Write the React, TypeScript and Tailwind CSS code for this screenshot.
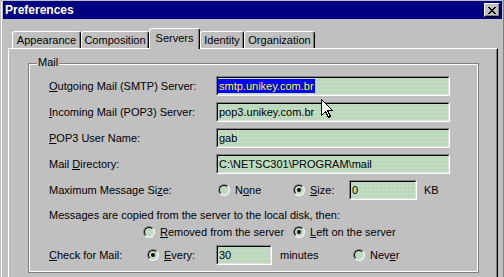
import React from "react";

type FieldProps = {
  width: string;
  value: string;
  selected?: boolean;
};

function Field({ width, value, selected }: FieldProps) {
  return (
    <div
      className={`h-[20px] shrink-0 border border-t-[#808080] border-l-[#808080] border-b-white border-r-white ${width}`}
    >
      <div className="flex h-full items-center border border-t-black border-l-black border-b-[#dfdfdf] border-r-[#dfdfdf] bg-[#c0dcc0] bg-[radial-gradient(circle,#b0cab0_0.6px,transparent_0.8px)] bg-[length:4px_4px] text-[11px] leading-[14px] text-black">
        {selected ? (
          <span className="bg-[#0000ff] pl-[1px] pr-[1px] text-[#ffff00]">{value}</span>
        ) : (
          <span className="pl-[1px]">{value}</span>
        )}
      </div>
    </div>
  );
}

function Radio({ checked }: { checked?: boolean }) {
  return (
    <span className="inline-block h-[12px] w-[12px] shrink-0 rounded-full border border-t-[#808080] border-l-[#808080] border-b-white border-r-white">
      <span className="flex h-full w-full items-center justify-center rounded-full border border-t-black border-l-black border-b-[#dfdfdf] border-r-[#dfdfdf] bg-[#c0dcc0]">
        {checked && <span className="h-[4px] w-[4px] rounded-full bg-black" />}
      </span>
    </span>
  );
}

function Tab({ label, width, active }: { label: string; width: string; active?: boolean }) {
  if (active) {
    return (
      <div
        className={`relative z-10 -mb-[1px] flex h-[21px] items-center justify-center rounded-t-[3px] border-l border-t border-white border-r border-r-black bg-[#c0c0c0] pb-[2px] shadow-[inset_-1px_0_0_#808080] ${width}`}
      >
        {label}
      </div>
    );
  }
  return (
    <div
      className={`flex h-[17px] items-center justify-center rounded-t-[3px] border-l border-t border-white border-r border-r-black shadow-[inset_-1px_0_0_#808080] ${width}`}
    >
      {label}
    </div>
  );
}

function CloseGlyph() {
  return (
    <svg width="8" height="7" viewBox="0 0 8 7" shapeRendering="crispEdges">
      <path
        d="M0 0h2v1H0zM6 0h2v1H6zM1 1h2v1H1zM5 1h2v1H5zM2 2h4v1H2zM3 3h2v1H3zM2 4h4v1H2zM1 5h2v1H1zM5 5h2v1H5zM0 6h2v1H0zM6 6h2v1H6z"
        fill="#000"
      />
    </svg>
  );
}

function Cursor() {
  return (
    <svg
      className="absolute left-[321px] top-[99px]"
      width="13"
      height="20"
      viewBox="0 0 13 20"
      shapeRendering="crispEdges"
    >
      <path
        d="M0.5 0.5 L0.5 16.5 L4.5 12.5 L7.5 18.5 L9.5 17.5 L6.5 11.5 L11.5 11.5 Z"
        fill="#fff"
        stroke="#000"
        strokeWidth="1"
      />
    </svg>
  );
}

export default function App() {
  return (
    <div className="relative h-[277px] w-[504px] overflow-hidden border-r border-[#808080] bg-[#c0c0c0] pr-[1px] pt-[1px] font-['Liberation_Sans',Arial,sans-serif] text-[11px] leading-[13px] text-black">
      <div className="ml-[1px] h-full border-l border-white pl-[1px]">
        {/* title bar */}
        <div className="flex h-[18px] items-center justify-between bg-[#000080] pl-[2px] pr-[2px]">
          <span className="text-[12px] font-bold leading-[14px] text-white">Preferences</span>
          <button
            type="button"
            className="flex h-[14px] w-[16px] items-center justify-center border border-t-white border-l-white border-b-black border-r-black bg-[#c0c0c0] shadow-[inset_-1px_-1px_0_#808080]"
          >
            <CloseGlyph />
          </button>
        </div>

        {/* tabs */}
        <div className="ml-[9px] mt-[9px] flex h-[20px] items-end">
          <Tab label="Appearance" width="w-[69px]" />
          <Tab label="Composition" width="w-[68px]" />
          <Tab label="Servers" width="w-[51px]" active />
          <Tab label="Identity" width="w-[44px]" />
          <Tab label="Organization" width="w-[71px]" />
        </div>

        {/* tab page */}
        <div className="ml-[5px] h-[240px] w-[490px] border-l border-t border-white border-r border-r-black pl-[19px] pt-[14px] shadow-[inset_-1px_0_0_#808080]">
          <div className="relative h-[210px] w-[451px] border border-[#808080]">
            <span className="absolute -top-[8px] left-[8px] bg-[#c0c0c0] px-[1px]">Mail</span>
            <div className="h-full w-full border border-white pl-[19px] pt-[11px]">
              <div className="flex h-[20px] items-center">
                <span className="w-[167px]">
                  <u>O</u>utgoing Mail (SMTP) Server:
                </span>
                <Field width="w-[234px]" value="smtp.unikey.com.br" selected />
              </div>
              <div className="mt-[6px] flex h-[20px] items-center">
                <span className="w-[167px]">
                  <u>I</u>ncoming Mail (POP3) Server:
                </span>
                <Field width="w-[234px]" value="pop3.unikey.com.br" />
              </div>
              <div className="mt-[6px] flex h-[20px] items-center">
                <span className="w-[167px]">
                  <u>P</u>OP3 User Name:
                </span>
                <Field width="w-[234px]" value="gab" />
              </div>
              <div className="mt-[6px] flex h-[20px] items-center">
                <span className="w-[167px]">
                  Mail <u>D</u>irectory:
                </span>
                <Field width="w-[234px]" value="C:\NETSC301\PROGRAM\mail" />
              </div>

              <div className="mt-[6px] flex h-[20px] items-center">
                <span className="w-[167px]">
                  Maximum Message Si<u>z</u>e:
                </span>
                <div className="flex w-[75px] items-center pl-[2px]">
                  <Radio />
                  <span className="ml-[5px]">
                    N<u>o</u>ne
                  </span>
                </div>
                <div className="flex w-[58px] items-center pl-[2px]">
                  <Radio checked />
                  <span className="ml-[5px]">
                    <u>S</u>ize:
                  </span>
                </div>
                <Field width="w-[68px]" value="0" />
                <span className="ml-[7px]">KB</span>
              </div>

              <p className="mt-[9px] h-[13px]">Messages are copied from the server to the local disk, then:</p>

              <div className="mt-[3px] flex h-[14px] items-center pl-[94px]">
                <div className="flex w-[150px] items-center">
                  <Radio />
                  <span className="ml-[5px]">
                    <u>R</u>emoved from the server
                  </span>
                </div>
                <div className="flex items-center">
                  <Radio checked />
                  <span className="ml-[5px]">
                    <u>L</u>eft on the server
                  </span>
                </div>
              </div>

              <div className="mt-[6px] flex h-[20px] items-center">
                <span className="w-[98px]">
                  <u>C</u>heck for Mail:
                </span>
                <div className="flex w-[69px] items-center">
                  <Radio checked />
                  <span className="ml-[5px]">
                    <u>E</u>very:
                  </span>
                </div>
                <Field width="w-[56px]" value="30" />
                <span className="ml-[8px] w-[73px]">minutes</span>
                <div className="flex items-center">
                  <Radio />
                  <span className="ml-[5px]">
                    Nev<u>e</u>r
                  </span>
                </div>
              </div>
            </div>
          </div>
        </div>
      </div>
      <Cursor />
    </div>
  );
}
